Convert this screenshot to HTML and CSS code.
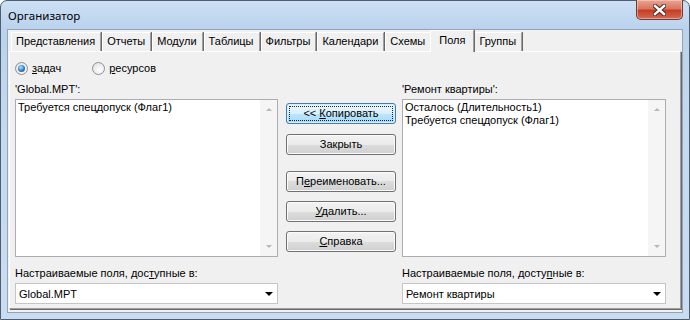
FILE: index.html
```html
<!DOCTYPE html>
<html lang="ru">
<head>
    <meta charset="UTF-8">
    <title>Организатор</title>
    <link rel="stylesheet" href="styles.css">
</head>
<body>

<div class="window">
    <div class="titlebar">
        <span class="title">Организатор</span>
        <div class="close-btn">
            <svg width="13" height="12" viewBox="0 0 13 12">
                <path d="M2 2 L11 10 M11 2 L2 10" stroke="#4a2a26" stroke-width="4.4" stroke-linecap="square"/>
                <path d="M2 2 L11 10 M11 2 L2 10" stroke="#fff" stroke-width="2.4" stroke-linecap="square"/>
            </svg>
        </div>
    </div>

    <div class="client">
        <div class="tabs">
            <div class="tab">Представления</div>
            <div class="tab">Отчеты</div>
            <div class="tab">Модули</div>
            <div class="tab">Таблицы</div>
            <div class="tab">Фильтры</div>
            <div class="tab">Календари</div>
            <div class="tab">Схемы</div>
            <div class="tab active">Поля</div>
            <div class="tab">Группы</div>
        </div>

        <div class="panel">
            <div class="radios">
                <label class="radio-item"><span class="radio checked"></span><u>з</u>адач</label>
                <label class="radio-item second"><span class="radio"></span><u>р</u>есурсов</label>
            </div>

            <div class="lists">
                <div class="col col-left">
                    <div class="caption">'Global.MPT':</div>
                    <div class="listbox">
                        <div class="items">
                            <div>Требуется спецдопуск (Флаг1)</div>
                        </div>
                        <div class="scrollbar">
                            <span class="arrow-up"></span>
                            <span class="arrow-down"></span>
                        </div>
                    </div>
                </div>

                <div class="buttons">
                    <div class="btn default"><span class="focus">&lt;&lt; <u>К</u>опировать</span></div>
                    <div class="btn gap-a">Закрыть</div>
                    <div class="btn gap-b">П<u>е</u>реименовать...</div>
                    <div class="btn gap-c"><u>У</u>далить...</div>
                    <div class="btn gap-c"><u>С</u>правка</div>
                </div>

                <div class="col col-right">
                    <div class="caption">'Ремонт квартиры':</div>
                    <div class="listbox">
                        <div class="items">
                            <div>Осталось (Длительность1)</div>
                            <div>Требуется спецдопуск (Флаг1)</div>
                        </div>
                        <div class="scrollbar">
                            <span class="arrow-up"></span>
                            <span class="arrow-down"></span>
                        </div>
                    </div>
                </div>
            </div>

            <div class="bottom">
                <div class="col col-left">
                    <div class="caption">Настраиваемые поля, дос<u>т</u>упные в:</div>
                    <div class="combo">
                        <span>Global.MPT</span>
                        <span class="combo-arrow"></span>
                    </div>
                </div>
                <div class="col col-right">
                    <div class="caption">Настраиваемые поля, досту<u>п</u>ные в:</div>
                    <div class="combo">
                        <span>Ремонт квартиры</span>
                        <span class="combo-arrow"></span>
                    </div>
                </div>
            </div>
        </div>
    </div>
</div>

</body>
</html>
```

FILE: styles.css
```css
/* Page */
body {
    margin: 0;
    padding: 0;
    background: #fff;
    font-family: 'Liberation Sans', Arial, sans-serif;
    font-size: 11px;
    color: #000;
}

u {
    text-decoration: underline;
    text-underline-offset: 1px;
}

/* Window frame */
.window {
    width: 688px;
    height: 318px;
    border: 1px solid #4f5d6e;
    border-radius: 7px 7px 0 0;
    background: linear-gradient(#cde0f4, #bad2ec 28px, #c4d9ef 120px, #cadcf0);
    display: flex;
    flex-direction: column;
}

.titlebar {
    height: 28px;
    display: flex;
    justify-content: space-between;
    align-items: flex-start;
}

.title {
    font-family: 'Noto Sans', sans-serif;
    font-size: 11.5px;
    margin: 7px 0 0 7px;
    color: #000;
}

.close-btn {
    width: 45px;
    height: 19px;
    margin: -1px 6px 0 0;
    border: 1px solid #6e3a33;
    border-top: none;
    border-radius: 0 0 5px 5px;
    background: linear-gradient(#e9a593, #d9775f 45%, #c53d27 55%, #d56a50);
    box-shadow: inset 0 0 0 1px rgba(255, 220, 210, 0.5);
    display: flex;
    align-items: center;
    justify-content: center;
}

/* Client area */
.client {
    flex: 1;
    margin: 0 6px 6px 6px;
    border: 1px solid #8ea5bd;
    background: #f0f0f0;
    display: flex;
    flex-direction: column;
    padding: 0 1px 3px 1px;
}

/* Tabs */
.tabs {
    height: 21px;
    display: flex;
    align-items: flex-end;
    padding-left: 2px;
}

.tab {
    height: 18px;
    line-height: 17px;
    padding: 0 5px 0 4px;
    border-top: 1px solid #fff;
    border-left: 1px solid #fff;
    border-right: 1px solid #a0a0a0;
    box-shadow: 1px 0 0 #696969;
    margin-right: 1px;
    background: #f0f0f0;
}

.tab.active {
    height: 21px;
    line-height: 18px;
    margin-bottom: -1px;
    padding: 0 8px 0 8px;
    margin-left: -2px;
    margin-right: 0;
    position: relative;
    z-index: 1;
}

/* Tab panel */
.panel {
    flex: 1;
    border-top: 1px solid #fff;
    border-left: 1px solid #fff;
    border-right: 1px solid #a0a0a0;
    border-bottom: 1px solid #a0a0a0;
    box-shadow: 1px 1px 0 #696969;
    padding: 0 0 0 5px;
}

/* Radio buttons */
.radios {
    display: flex;
    margin-top: 10px;
    height: 13px;
    line-height: 13px;
}

.radio-item {
    display: flex;
    align-items: center;
}

.radio-item.second {
    margin-left: 31px;
}

.radio {
    width: 11px;
    height: 11px;
    border: 1px solid #8e8f8f;
    border-radius: 50%;
    background: radial-gradient(circle at 60% 65%, #fff, #dcdcdc);
    margin-right: 4px;
    position: relative;
}

.radio.checked::after {
    content: "";
    position: absolute;
    left: 2px;
    top: 2px;
    width: 7px;
    height: 7px;
    border-radius: 50%;
    background: radial-gradient(circle at 40% 35%, #b6e6fd, #2a7cc6 55%, #134a86);
}

/* Lists and buttons */
.lists, .bottom {
    display: flex;
    align-items: flex-start;
}

.lists {
    margin-top: 8px;
}

.col-left {
    width: 263px;
}

.col-right {
    width: 264px;
    margin-left: 6px;
}

.bottom .col-right {
    margin-left: 124px;
}

.caption {
    height: 13px;
    line-height: 13px;
}

.listbox {
    margin-top: 3px;
    height: 156px;
    border: 1px solid #abadb3;
    background: #fff;
    display: flex;
}

.items {
    flex: 1;
    padding: 1px 2px;
    line-height: 13px;
}

.scrollbar {
    width: 17px;
    background: #f5f5f5;
    display: flex;
    flex-direction: column;
    justify-content: space-between;
    align-items: center;
    padding: 8px 0 8px;
}

.arrow-up, .arrow-down {
    width: 0;
    height: 0;
    border-left: 3.5px solid transparent;
    border-right: 3.5px solid transparent;
}

.arrow-up {
    border-bottom: 3px solid #b8b8b8;
}

.arrow-down {
    border-top: 3px solid #b8b8b8;
}

.buttons {
    width: 110px;
    margin: 20px 0 0 8px;
    display: flex;
    flex-direction: column;
}

.btn {
    height: 19px;
    line-height: 19px;
    text-align: center;
    border: 1px solid #707070;
    border-radius: 3px;
    background: linear-gradient(#f2f2f2, #ebebeb 50%, #dddddd 50%, #cfcfcf);
    box-shadow: inset 0 0 0 1px #fbfbfb;
}

.btn.default {
    border-color: #3c7fb1;
    background: linear-gradient(#eaf6fd, #d9f0fc 50%, #bee6fd 50%, #a7d9f5);
    box-shadow: inset 0 0 0 1px #d7edfa;
    padding: 2px;
    height: 15px;
    line-height: 13px;
}

.btn .focus {
    display: block;
    border: 1px dotted #222;
    height: 13px;
}

.gap-a {
    margin-top: 10px;
}

.gap-b {
    margin-top: 16px;
}

.gap-c {
    margin-top: 9px;
}

/* Combo boxes */
.bottom {
    margin-top: 10px;
}

.combo {
    margin-top: 3px;
    height: 19px;
    border: 1px solid #c5c5c5;
    background: #fff;
    display: flex;
    align-items: center;
    justify-content: space-between;
    padding: 0 4px 0 3px;
}

.combo-arrow {
    width: 0;
    height: 0;
    border-left: 4px solid transparent;
    border-right: 4px solid transparent;
    border-top: 4px solid #000;
}
```
